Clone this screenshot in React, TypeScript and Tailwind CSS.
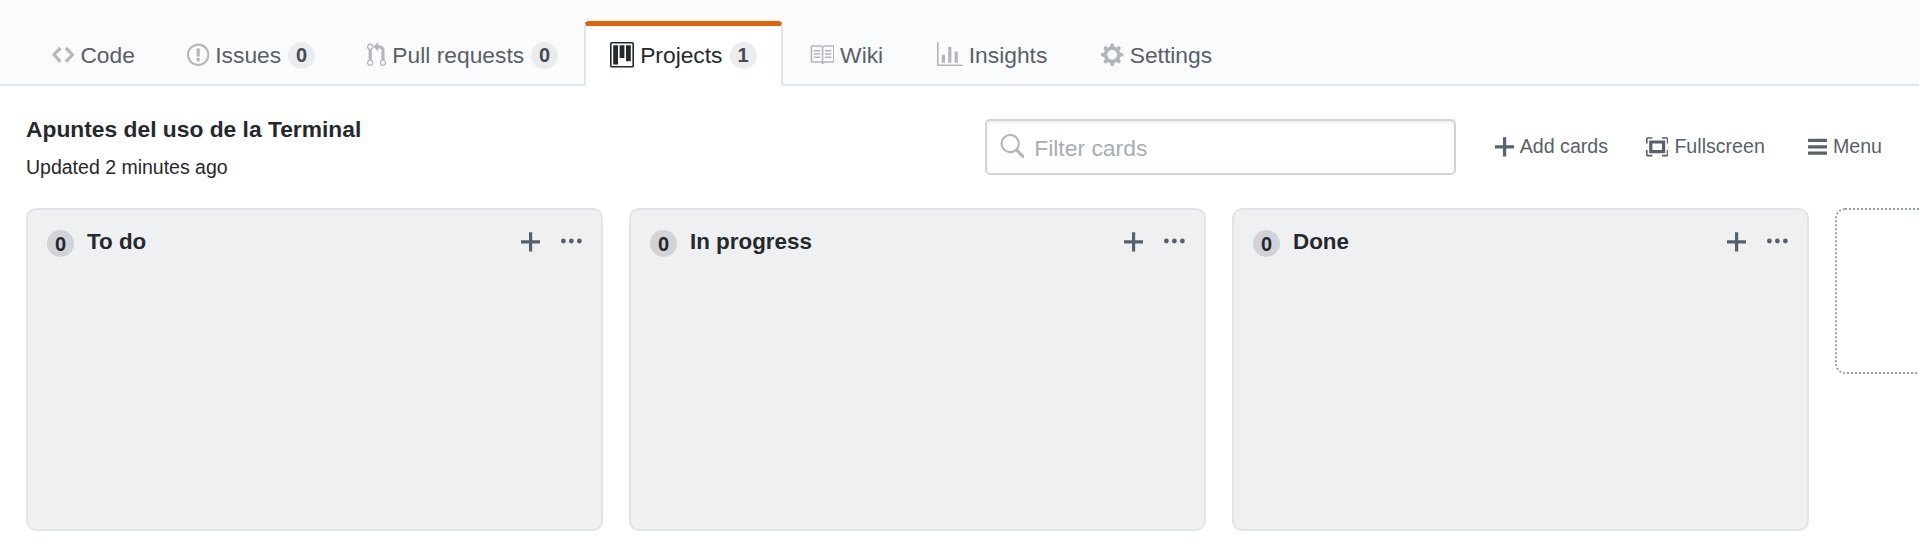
import React from "react";

// octicons, drawn at 1.6x of their base 16px grid
function Icon({ w, d, className = "" }: { w: number; d: string; className?: string }) {
  return (
    <svg viewBox={`0 0 ${w} 16`} width={w * 1.6} height={25.6} fill="currentColor" className={`shrink-0 ${className}`}>
      <path fillRule="evenodd" d={d} />
    </svg>
  );
}

const icons = {
  code: { w: 14, d: "M9.5 3L8 4.5 11.5 8 8 11.5 9.5 13 14 8 9.5 3zm-5 0L0 8l4.5 5L6 11.5 2.5 8 6 4.5 4.5 3z" },
  issue: { w: 14, d: "M7 2.3c3.14 0 5.7 2.56 5.7 5.7s-2.56 5.7-5.7 5.7A5.71 5.71 0 0 1 1.3 8c0-3.14 2.56-5.7 5.7-5.7zM7 1C3.14 1 0 4.14 0 8s3.14 7 7 7 7-3.14 7-7-3.14-7-7-7zm1 3H6v5h2V4zm0 6H6v2h2v-2z" },
  pull: { w: 12, d: "M11 11.28V5c-.03-.78-.34-1.47-.94-2.06C9.46 2.35 8.78 2.03 8 2H7V0L4 3l3 3V4h1c.27.02.48.11.69.31.21.2.3.42.31.69v6.28A1.993 1.993 0 0 0 10 15a1.993 1.993 0 0 0 1-3.72zm-1 2.92c-.66 0-1.2-.55-1.2-1.2 0-.65.55-1.2 1.2-1.2.65 0 1.2.55 1.2 1.2 0 .65-.55 1.2-1.2 1.2zM4 3c0-1.11-.89-2-2-2a1.993 1.993 0 0 0-1 3.72v6.56A1.993 1.993 0 0 0 2 15a1.993 1.993 0 0 0 1-3.72V4.72c.59-.34 1-.98 1-1.72zm-.8 10c0 .66-.55 1.2-1.2 1.2-.65 0-1.2-.55-1.2-1.2 0-.65.55-1.2 1.2-1.2.65 0 1.2.55 1.2 1.2zM2 4.2C1.34 4.2.8 3.65.8 3c0-.65.55-1.2 1.2-1.2.65 0 1.2.55 1.2 1.2 0 .65-.55 1.2-1.2 1.2z" },
  project: { w: 15, d: "M10 12h3V2h-3v10zm-4-2h3V2H6v8zm-4 4h3V2H2v12zm-1 1h13V1H1v14zM14 0H1a1 1 0 0 0-1 1v14a1 1 0 0 0 1 1h13a1 1 0 0 0 1-1V1a1 1 0 0 0-1-1z" },
  book: { w: 16, d: "M3 5h4v1H3V5zm0 3h4V7H3v1zm0 2h4V9H3v1zm11-5h-4v1h4V5zm0 2h-4v1h4V7zm0 2h-4v1h4V9zm2-6v9c0 .55-.45 1-1 1H9.5l-1 1-1-1H2c-.55 0-1-.45-1-1V3c0-.55.45-1 1-1h5.5l1 1 1-1H15c.55 0 1 .45 1 1zm-8 .5L7.5 3H2v9h6V3.5zm7-.5H9.5l-.5.5V12h6V3z" },
  graph: { w: 16, d: "M16 14v1H0V0h1v14h15zM5 13H3V8h2v5zm4 0H7V3h2v10zm4 0h-2V6h2v7z" },
  gear: { w: 14, d: "M14 8.77v-1.6l-1.94-.64-.45-1.09.88-1.84-1.13-1.13-1.81.91-1.09-.45-.69-1.92h-1.6l-.63 1.94-1.11.45-1.84-.88-1.13 1.13.91 1.81-.45 1.09L0 7.23v1.59l1.94.64.45 1.09-.88 1.84 1.13 1.13 1.81-.91 1.09.45.69 1.92h1.59l.63-1.94 1.11-.45 1.84.88 1.13-1.13-.92-1.81.47-1.09L14 8.75v.02zM7 11c-1.66 0-3-1.34-3-3s1.34-3 3-3 3 1.34 3 3-1.34 3-3 3z" },
  plus: { w: 12, d: "M12 9H7v5H5V9H0V7h5V2h2v5h5v2z" },
  screen: { w: 14, d: "M13 10h1v3c0 .547-.453 1-1 1h-3v-1h3v-3zM1 10H0v3c0 .547.453 1 1 1h3v-1H1v-3zm0-7h3V2H1c-.547 0-1 .453-1 1v3h1V3zm1 1h10v8H2V4zm2 6h6V6H4v4zm6-8v1h3v3h1V3c0-.547-.453-1-1-1h-3z" },
  bars: { w: 12, d: "M11.41 9H.59C0 9 0 8.59 0 8c0-.59 0-1 .59-1H11.4c.59 0 .59.41.59 1 0 .59 0 1-.59 1h.01zm0-4H.59C0 5 0 4.59 0 4c0-.59 0-1 .59-1H11.4c.59 0 .59.41.59 1 0 .59 0 1-.59 1h.01zM.59 11H11.4c.59 0 .59.41.59 1 0 .59 0 1-.59 1H.59C0 13 0 12.59 0 12c0-.59 0-1 .59-1z" },
  kebab: { w: 13, d: "M1.5 9a1.5 1.5 0 1 0 0-3 1.5 1.5 0 0 0 0 3zm5 0a1.5 1.5 0 1 0 0-3 1.5 1.5 0 0 0 0 3zM13 7.5a1.5 1.5 0 1 1-3 0 1.5 1.5 0 0 1 3 0z" },
  search: { w: 16, d: "M15.7 13.3l-3.81-3.83A5.93 5.93 0 0 0 13 6c0-3.31-2.69-6-6-6S1 2.69 1 6s2.69 6 6 6c1.3 0 2.48-.41 3.47-1.11l3.83 3.81c.19.2.45.3.7.3.25 0 .52-.09.7-.3a.996.996 0 0 0 0-1.41v.01zM7 10.7c-2.59 0-4.7-2.11-4.7-4.7 0-2.59 2.11-4.7 4.7-4.7 2.59 0 4.7 2.11 4.7 4.7 0 2.59-2.11 4.7-4.7 4.7z" },
};

const tabs = [
  { label: "Code", icon: icons.code },
  { label: "Issues", icon: icons.issue, count: 0 },
  { label: "Pull requests", icon: icons.pull, count: 0 },
  { label: "Projects", icon: icons.project, count: 1, active: true },
  { label: "Wiki", icon: icons.book },
  { label: "Insights", icon: icons.graph, className: "ml-[2px]" },
  { label: "Settings", icon: icons.gear, className: "ml-[2px]" },
];

const columns = ["To do", "In progress", "Done"];

function Tab({
  label,
  icon,
  count,
  active,
  className = "",
}: {
  label: string;
  icon: { w: number; d: string };
  count?: number;
  active?: boolean;
  className?: string;
}) {
  return (
    <a
      className={
        (active
          ? "flex h-[65px] -mb-[2px] items-center gap-[6px] rounded-t-[5px] border-x-2 border-t-[5px] border-x-[#e1e4e8] border-t-[#e36209] bg-white px-[24px] pb-[2px] text-[#24292e] "
          : "flex h-[65px] -mb-[2px] items-center gap-[6px] border-x-2 border-t-[5px] border-transparent px-[24px] pb-[2px] text-[#586069] ") + className
      }
    >
      <Icon w={icon.w} d={icon.d} className={active ? "text-[#24292e]" : "text-[#b3b7bb]"} />
      <span>{label}</span>
      {count !== undefined && (
        <span className="ml-[1px] flex h-[27px] w-[27px] items-center justify-center rounded-full bg-[#ebeced] text-[20px] font-bold text-[#444d56]">
          {count}
        </span>
      )}
    </a>
  );
}

function Action({ label, icon, className = "" }: { label: string; icon: { w: number; d: string }; className?: string }) {
  return (
    <button className={`flex items-center gap-[6px] text-[19.6px] text-[#586069] ${className}`}>
      <Icon w={icon.w} d={icon.d} />
      {label}
    </button>
  );
}

export default function App() {
  return (
    <div className="h-[551px] w-full overflow-hidden bg-white font-['Liberation_Sans',sans-serif] text-[#24292e]">
      <nav className="flex h-[86px] items-end border-b-2 border-[#e1e4e8] bg-[#fafbfc] pl-[26px] text-[22.8px]">
        {tabs.map((t) => (
          <Tab key={t.label} {...t} />
        ))}
      </nav>

      <div className="flex items-start justify-between pl-[26px] pr-[37px] pt-[29px]">
        <div>
          <h1 className="text-[22.8px] font-bold leading-[28px]">Apuntes del uso de la Terminal</h1>
          <p className="mt-[11px] text-[19.5px] leading-[26px]">Updated 2 minutes ago</p>
        </div>
        <div className="mt-[4px] flex items-center">
          <label className="flex h-[56px] w-[471px] items-center gap-[10px] rounded-[5px] border-2 border-[#d1d5da] bg-white pl-[12px] shadow-[inset_0_2px_3px_rgba(27,31,35,0.075)]">
            <Icon w={icons.search.w} d={icons.search.d} className="text-[#b3b7bb]" />
            <input placeholder="Filter cards" className="mt-[2px] w-full text-[22.9px] outline-none placeholder:text-[#a8adb3]" />
          </label>
          <div className="ml-[39px] flex items-center gap-[38px]">
            <Action label="Add cards" icon={icons.plus} />
            <Action label="Fullscreen" icon={icons.screen} />
            <Action label="Menu" icon={icons.bars} className="ml-[5px]" />
          </div>
        </div>
      </div>

      <div className="mt-[28px] flex items-start gap-[26px] overflow-hidden pl-[26px]">
        {columns.map((name) => (
          <section key={name} className="h-[323px] w-[577px] shrink-0 rounded-[10px] border-2 border-[#e1e4e8] bg-[#eff0f2] px-[19px] pt-[16px]">
            <div className="flex items-center">
              <span className="mt-[4px] flex h-[27px] w-[27px] items-center justify-center rounded-full bg-[#d1d3d6] text-[20px] font-bold">0</span>
              <h3 className="ml-[13px] text-[22.4px] font-bold leading-[28px]">{name}</h3>
              <div className="ml-auto flex items-center gap-[21px] text-[#586069]">
                <Icon w={icons.plus.w} d={icons.plus.d} />
                <Icon w={icons.kebab.w} d={icons.kebab.d} />
              </div>
            </div>
          </section>
        ))}
        <div className="h-[166px] w-[577px] shrink-0 rounded-[10px] border-2 border-dotted border-[#959da5]" />
      </div>
    </div>
  );
}
